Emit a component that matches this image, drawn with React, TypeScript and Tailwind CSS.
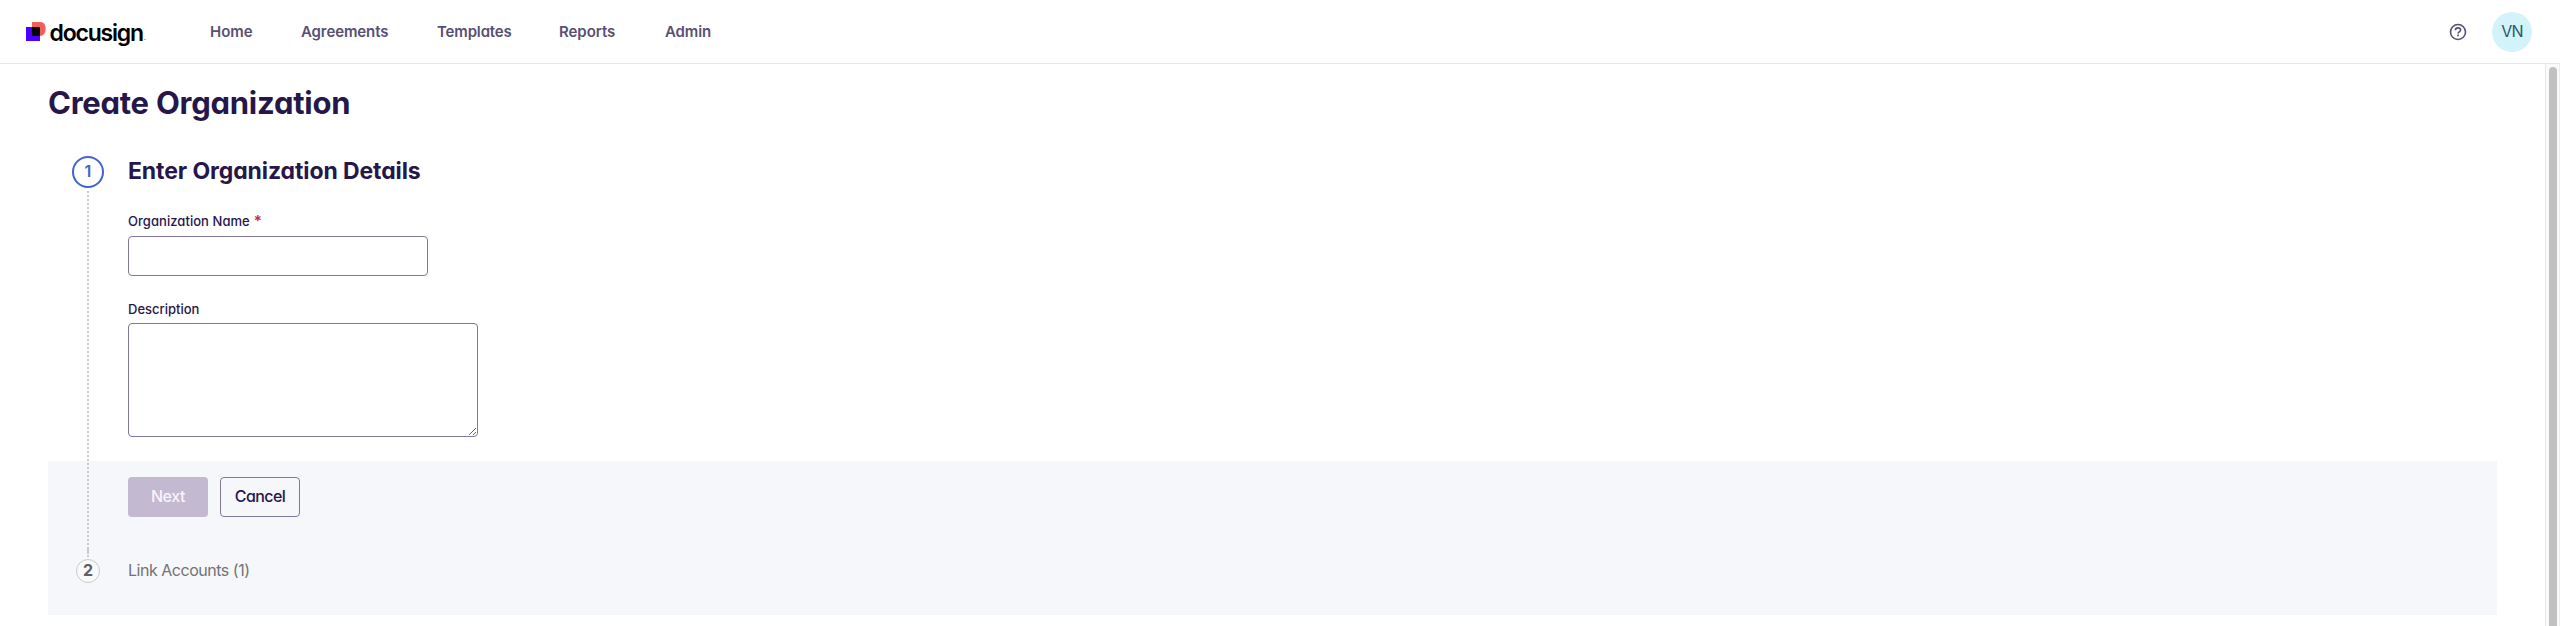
import React from "react";

const navItems = [
  { label: "Home", className: "w-[91px] tracking-[0px]" },
  { label: "Agreements", className: "w-[136px] tracking-[-0.1px]" },
  { label: "Templates", className: "w-[122px] tracking-[-0.15px]" },
  { label: "Reports", className: "w-[106px] tracking-[-0.05px]" },
  { label: "Admin", className: "w-[60px] tracking-[-0.1px]" },
];

function Logo() {
  return (
    <div className="flex h-full w-[184px] shrink-0 items-start pl-[26px] pt-[22px]">
      <svg width="20" height="20" viewBox="0 0 20 20" className="shrink-0">
        <path d="M6 0h8c3.800 0 5.600 2.600 5.600 6.800 0 4.400-2.200 7.200-5.600 7.200H6z" fill="#f25f54" />
        <path d="M0 5h14v14H0z" fill="#4c00ff" />
        <path d="M6 5h5.300C13.300 5 14 6.500 14 8v6H6z" fill="#000" />
      </svg>
      <span className="ml-[3.5px] mt-[-3px] text-[23px] leading-[28px] font-semibold tracking-[-1.2px] text-black">
        docusign
      </span>
      <span className="ml-px mt-[17px] h-px w-[2px] bg-[#b5b5b5]" />
    </div>
  );
}

function Header() {
  return (
    <header className="flex h-[64px] w-full shrink-0 items-center border-b border-[#e5e5e6] bg-white">
      <Logo />
      <nav className="flex pl-[26px] pt-px text-[15px] leading-[20px] font-semibold text-[#594f74]">
        {navItems.map((item) => (
          <a key={item.label} className={item.className}>
            {item.label}
          </a>
        ))}
      </nav>
      <div className="ml-auto flex items-center gap-[25px] pr-7">
        <svg width="18" height="18" viewBox="0 0 18 18" fill="none" stroke="#594f74">
          <circle cx="9" cy="9" r="7.500" strokeWidth="1.600" />
          <path d="M6.400 7.200C6.400 5.700 7.500 4.900 9 4.900s2.600.8 2.600 2.100c0 1.900-2.500 1.700-2.500 3.500" strokeWidth="1.600" />
          <path d="M8.200 12.400h1.700" strokeWidth="1.600" />
        </svg>
        <div className="flex size-10 items-center justify-center rounded-full bg-[#d3f3fb] text-[16px] text-[#285a6c]">
          <span className="mt-[-2px] tracking-[-0.8px]">VN</span>
        </div>
      </div>
    </header>
  );
}

function StepLine() {
  return (
    <svg width="2" height="371" viewBox="0 0 2 371" className="shrink-0">
      <path d="M1 3V371" stroke="#cacaca" strokeWidth="2" strokeDasharray="2 2" />
      <path d="M1 359v7" stroke="#cacaca" strokeWidth="2" />
    </svg>
  );
}

export default function App() {
  return (
    <div className="flex h-[626px] w-full flex-col overflow-hidden bg-white font-['Inter',sans-serif] text-[#26164a] [font-feature-settings:'cv11']">
      <Header />
      <div className="flex min-h-0 flex-1">
        <main className="min-w-0 flex-1 pl-12 pr-12">
          <h1 className="pt-[19px] text-[31px] leading-[40px] font-[650] tracking-[-0.25px]">Create Organization</h1>
          <div className="mt-[33px] grid grid-cols-1 grid-rows-1">
            <div className="col-start-1 row-start-1 mt-[305px] h-[154px] bg-[#f6f7fb]" />
            <div className="col-start-1 row-start-1 flex">
              <div className="ml-6 flex w-8 shrink-0 flex-col items-center">
                <div className="flex size-8 shrink-0 items-center justify-center rounded-full border-2 border-[#3f63d2] bg-white pb-[2px] text-[16px] leading-none font-semibold text-[#3f63d2]">
                  1
                </div>
                <StepLine />
                <div className="flex size-6 shrink-0 justify-center rounded-full border border-[#cacaca] bg-[#f9f9f9] text-[16px] leading-[20px] font-bold text-[#606060]">
                  2
                </div>
              </div>
              <div className="ml-6 flex flex-col">
                <h2 className="text-[23px] leading-[30px] font-[650] tracking-[-0.1px]">Enter Organization Details</h2>
                <label className="mt-[26px] flex h-[24px] items-start text-[13px] leading-[18px] font-medium whitespace-nowrap">
                  <span className="tracking-[0.05px]">Organization Name</span>
                  <span className="ml-[4px] text-[15px] font-semibold text-[#c5284d]">*</span>
                </label>
                <input className="block h-10 w-[300px] rounded-[4px] border border-[#827798] bg-white px-2" />
                <label className="mt-[24px] flex h-[23px] items-start text-[13px] leading-[18px] font-medium">
                  <span className="tracking-[0px]">Description</span>
                </label>
                <textarea className="block h-[114px] w-[350px] resize rounded-[4px] border border-[#827798] bg-white p-2" />
                <div className="mt-10 flex gap-3 text-[16px]">
                  <button className="flex h-10 w-20 items-center justify-center rounded-[4px] bg-[#c3bad1] pb-[2px] font-medium text-[#f7f4fb]">
                    <span className="tracking-[-0.4px]">Next</span>
                  </button>
                  <button className="flex h-10 w-20 items-center justify-center rounded-[4px] border border-[#827798] pb-[2px] font-medium">
                    <span className="tracking-[-0.6px]">Cancel</span>
                  </button>
                </div>
                <div className="mt-[41px] text-[16px] leading-[24px] tracking-[-0.48px] text-[#737373]">Link Accounts (1)</div>
              </div>
            </div>
          </div>
        </main>
        <aside className="flex w-[15px] shrink-0 border-x border-l-[#e5e5e5] border-r-[#ededed] bg-[#fafafa] pl-[3px] pt-[3px]">
          <div className="w-2 rounded-t-full bg-[#c1c1c1]" />
        </aside>
      </div>
    </div>
  );
}
